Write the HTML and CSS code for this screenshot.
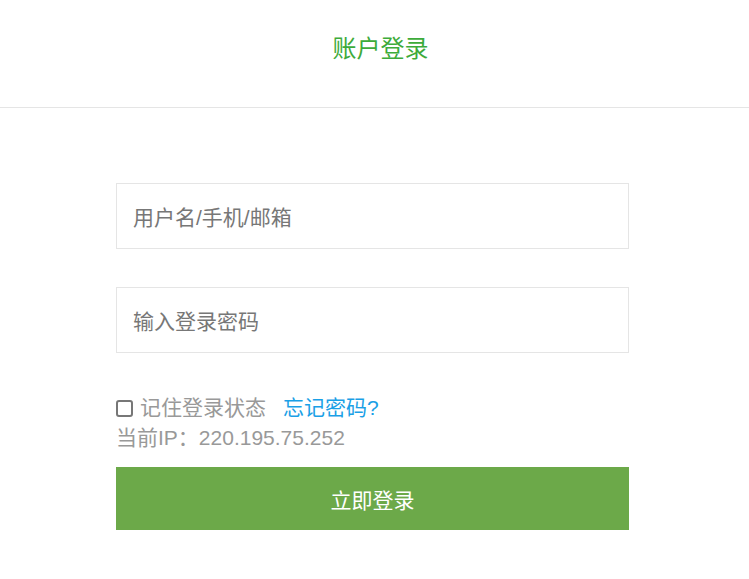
FILE: index.html
```html
<!DOCTYPE html>
<html lang="zh-CN">
<head>
    <meta charset="UTF-8">
    <meta name="viewport" content="width=device-width, initial-scale=1.0">
    <title>账户登录</title>
    <link rel="stylesheet" href="styles.css">
</head>
<body>
    <div class="header">
        <h1>账户登录</h1>
    </div>
    <form class="login">
        <input type="text" class="field" placeholder="用户名/手机/邮箱">
        <input type="password" class="field" placeholder="输入登录密码">
        <div class="options">
            <label class="remember"><input type="checkbox"> 记住登录状态</label>
            <a href="#" class="forgot">忘记密码?</a>
        </div>
        <div class="ip">当前IP：220.195.75.252</div>
        <button type="button" class="submit">立即登录</button>
    </form>
</body>
</html>
```

FILE: styles.css
```css
body {
    margin: 0;
    font-family: "Liberation Sans", "Noto Sans CJK SC", sans-serif;
    background: #fff;
    color: #999;
}
.header {
    height: 107px;
    border-bottom: 1px solid #e5e5e5;
    display: flex;
    align-items: center;
    justify-content: center;
}
h1 {
    margin: 0 0 14px 12px;
    font-size: 24px;
    font-weight: normal;
    color: #3dab3a;
}
.login {
    width: 513px;
    margin: 75px 0 0 116px;
}
.field {
    display: block;
    width: 100%;
    height: 66px;
    box-sizing: border-box;
    border: 1px solid #e5e5e5;
    padding: 4px 16px 0;
    font-size: 21px;
    font-family: inherit;
    color: #555;
    margin-bottom: 38px;
    outline: none;
}
.field::placeholder {
    color: #777;
}
.field + .field {
    margin-bottom: 41px;
}
.options {
    display: flex;
    align-items: center;
    font-size: 21px;
    line-height: 28px;
}
.remember {
    display: flex;
    align-items: center;
    color: #999;
}
.remember input {
    appearance: none;
    width: 17px;
    height: 17px;
    box-sizing: border-box;
    border: 2px solid #777;
    border-radius: 3px;
    margin: 0 7px 0 0;
    background: #fff;
}
.forgot {
    margin-left: 17px;
    color: #1aa0e6;
    text-decoration: none;
}
.ip {
    font-size: 21px;
    line-height: 28px;
    margin-top: 2px;
}
.submit {
    display: block;
    width: 100%;
    height: 63px;
    margin-top: 15px;
    border: none;
    background: #6ca949;
    color: #fff;
    font-size: 21px;
    font-family: inherit;
    cursor: pointer;
}
```
